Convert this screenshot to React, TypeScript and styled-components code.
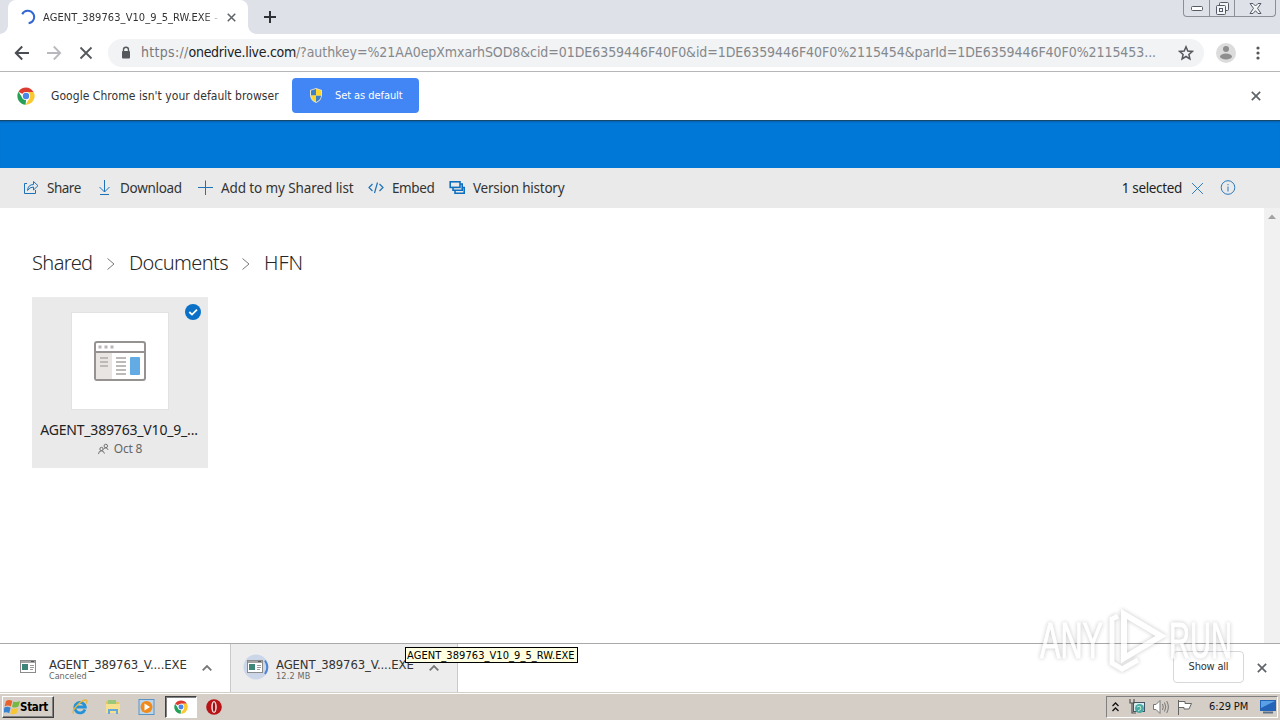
import React from 'react';
import styled, { createGlobalStyle } from 'styled-components';

const GlobalStyle = createGlobalStyle`
  * {
    box-sizing: border-box;
  }
  body {
    margin: 0;
    overflow: hidden;
    background: #fff;
  }
  svg {
    display: block;
    flex: none;
  }
`;

const tahoma = `'DejaVu Sans Condensed', 'DejaVu Sans', sans-serif`;
const segoe = `'Noto Sans', 'Open Sans', sans-serif`;

interface LabelProps {
  $size?: number;
  $spacing?: number;
  $color?: string;
  $left?: number;
}

const Label = styled.span<LabelProps>`
  font-size: ${({ $size = 11 }) => $size}px;
  letter-spacing: ${({ $spacing = 0 }) => $spacing}px;
  color: ${({ $color = '#333' }) => $color};
  margin-left: ${({ $left = 0 }) => $left}px;
  line-height: 16px;
  white-space: pre;
`;

const Screen = styled.div`
  position: relative;
  display: flex;
  flex-direction: column;
  width: 1280px;
  height: 720px;
  overflow: hidden;
  background: #fff;
  font-family: ${tahoma};
`;

const TabStrip = styled.div`
  display: flex;
  height: 34px;
  padding-left: 8px;
  background: #dee1e8;
`;

const Tab = styled.div`
  position: relative;
  display: flex;
  align-items: center;
  width: 240px;
  padding: 0 10px 0 12px;
  border-radius: 8px 8px 0 0;
  background: #fff;

  &::before,
  &::after {
    content: '';
    position: absolute;
    bottom: 0;
    width: 8px;
    height: 8px;
  }
  &::before {
    left: -8px;
    background: radial-gradient(circle at 0 0, transparent 7.5px, #fff 8px);
  }
  &::after {
    right: -8px;
    background: radial-gradient(circle at 100% 0, transparent 7.5px, #fff 8px);
  }
`;

const TabTitle = styled.div`
  display: flex;
  width: 176px;
  margin: 1px 8px 0 7px;
  mask-image: linear-gradient(90deg, #000 160px, transparent 180px);
`;

const NewTab = styled.div`
  display: flex;
  align-items: center;
  margin-left: 16px;
`;

const WindowButtons = styled.div`
  display: flex;
  height: 17px;
  margin: 0 4px 0 auto;
  border: 1px solid #8b8f98;
  border-top: 0;
  border-radius: 0 0 4px 4px;
`;

const WindowButton = styled.div<{ $width: number }>`
  display: flex;
  align-items: center;
  justify-content: center;
  width: ${({ $width }) => $width}px;

  & + & {
    border-left: 1px solid #8b8f98;
  }
`;

const Toolbar = styled.div`
  display: flex;
  align-items: center;
  height: 38px;
  padding: 0 13px 0 14px;
  border-bottom: 1px solid #b4b6b8;
`;

const NavIcons = styled.div`
  display: flex;
  gap: 16px;
  width: 94px;
`;

const AddressBar = styled.div`
  display: flex;
  align-items: center;
  width: 1096px;
  height: 28px;
  padding: 0 10px 0 12px;
  border-radius: 14px;
  background: #f1f3f4;
`;

const Url = styled.div`
  display: flex;
  flex: 1;
  margin: -2px 0 0 9px;
`;

const InfoBar = styled.div`
  display: flex;
  align-items: center;
  height: 48px;
  padding: 0 19px 0 17px;
`;

const InfoMessage = styled.div`
  display: flex;
  align-items: center;
  width: 402px;
  margin-right: auto;
`;

const DefaultButton = styled.div`
  display: flex;
  align-items: center;
  width: 127px;
  height: 35px;
  margin: -1px 0 0 auto;
  padding-left: 17px;
  border-radius: 4px;
  background: #4285f4;
`;

const SuiteHeader = styled.div`
  height: 48px;
  background: #0078d7;
  box-shadow: inset 0 1px 0 #17496f, inset 0 3px 2px -1px #0a60a8;
`;

const CommandBar = styled.div`
  display: flex;
  align-items: center;
  height: 40px;
  padding: 0 44px 0 23px;
  background: #eaeaea;
  font-family: ${segoe};
`;

const Command = styled.div<{ $width: number }>`
  display: flex;
  align-items: center;
  width: ${({ $width }) => $width}px;
`;

const Selection = styled.div`
  display: flex;
  align-items: center;
  margin-left: auto;
`;

const Content = styled.div`
  display: flex;
  height: 435px;
  font-family: ${segoe};
`;

const Files = styled.div`
  flex: 1;
  padding: 38px 32px 0;
`;

const Scrollbar = styled.div`
  display: flex;
  justify-content: center;
  width: 16px;
  padding-top: 6px;
  background: #f1f1f1;
`;

const Breadcrumb = styled.div`
  display: flex;
  align-items: center;
  height: 32px;
`;

const Crumb = styled.span<{ $width: number; $spacing: number }>`
  width: ${({ $width }) => $width}px;
  font-size: 20px;
  font-weight: 300;
  letter-spacing: ${({ $spacing }) => $spacing}px;
  color: #262626;
`;

const Chevron = styled.div`
  width: 37px;
  padding: 3px 0 0 15px;
`;

const Tile = styled.div`
  position: relative;
  display: flex;
  flex-direction: column;
  align-items: center;
  width: 176px;
  height: 171px;
  margin-top: 19px;
  padding-top: 16px;
  background: #eaeaea;
`;

const Thumb = styled.div`
  display: flex;
  align-items: center;
  justify-content: center;
  width: 96px;
  height: 96px;
  margin-bottom: 13px;
  background: #fff;
  box-shadow: 0 0 0 1px #e2e2e2;
`;

const TileMeta = styled.div`
  display: flex;
  align-items: center;
  gap: 5px;
  margin-top: 3px;
`;

const SelectedMark = styled.div`
  position: absolute;
  top: 7px;
  right: 7px;
`;

const Shelf = styled.div`
  display: flex;
  align-items: center;
  height: 49px;
  padding-right: 13px;
  border-top: 1px solid #a9a9a9;
`;

const Download = styled.div<{ $active?: boolean }>`
  display: flex;
  align-items: center;
  width: ${({ $active }) => ($active ? 227 : 231)}px;
  height: 48px;
  padding-left: ${({ $active }) => ($active ? 11 : 20)}px;
  border-right: 1px solid #c9c9c9;
  background: ${({ $active }) => ($active ? '#ededed' : '#fff')};
`;

const FileIcon = styled.div`
  margin-bottom: 3px;
`;

const DownloadText = styled.div<{ $left: number }>`
  display: flex;
  flex-direction: column;
  width: 153px;
  margin: 1px 0 0 ${({ $left }) => $left}px;

  span:last-child {
    line-height: 9px;
    margin-top: -1px;
  }
`;

const ShowAll = styled.div`
  display: flex;
  align-items: center;
  justify-content: center;
  width: 71px;
  height: 32px;
  margin: -2px 13px 0 auto;
  border: 1px solid #d6d8db;
  border-radius: 4px;
`;

const Tooltip = styled.div`
  position: absolute;
  left: 405px;
  top: 647px;
  display: flex;
  align-items: center;
  width: 173px;
  height: 16px;
  padding: 1px 0 0 1px;
  border: 1px solid #000;
  background: #ffffe1;
`;

const Taskbar = styled.div`
  display: flex;
  align-items: center;
  height: 28px;
  padding: 1px 2px 0 2px;
  border-top: 1px solid #d4d0c8;
  background: #d5cec7;
  box-shadow: inset 0 1px 0 #fff;
`;

const StartButton = styled.div`
  display: flex;
  align-items: center;
  width: 52px;
  height: 22px;
  padding-left: 1px;
  border: 1px solid;
  border-color: #fff #404040 #404040 #fff;
  box-shadow: inset -1px -1px 0 #808080;
  font-weight: bold;
`;

const QuickLaunch = styled.div`
  display: flex;
  align-items: center;
  gap: 17px;
  margin-left: 18px;
`;

const RunningApp = styled.div`
  display: flex;
  align-items: center;
  justify-content: center;
  width: 32px;
  height: 22px;
  margin: 0 -8px 0 -7px;
  border: 1px solid;
  border-color: #404040 #fff #fff #404040;
  background: #fff;
  box-shadow: inset 1px 1px 0 #808080;
`;

const Tray = styled.div`
  display: flex;
  align-items: center;
  width: 172px;
  height: 22px;
  margin-left: auto;
  padding-left: 5px;
  border: 1px solid;
  border-color: #808080 #fff #fff #808080;
`;

const Watermark = styled.svg`
  position: absolute;
  left: 1030px;
  top: 600px;
  overflow: visible;
  filter: drop-shadow(0 0 2px rgba(0, 0, 0, 0.3));
  opacity: 0.75;
`;

const Cross: React.FC<{ size: number; color?: string; weight?: number }> = ({ size, color = '#5f6368', weight = 2 }) => (
  <svg width={size} height={size} viewBox="0 0 12 12" stroke={color} strokeWidth={weight}>
    <path d="M1 1L11 11M11 1L1 11" />
  </svg>
);

const ChromeLogo: React.FC<{ size: number }> = ({ size }) => (
  <svg width={size} height={size} viewBox="0 0 18 18">
    <circle cx="9" cy="9" r="8.7" fill="#fff" />
    <path d="M9 9L1.5 4.7A8.7 8.7 0 0 1 16.5 4.9H9Z" fill="#dc3b30" />
    <path d="M9 4.9H16.6A8.7 8.7 0 0 1 8.6 17.7L12.6 11Z" fill="#fbc831" />
    <path d="M1.5 4.7L5.4 11L9 13L8.6 17.7A8.7 8.7 0 0 1 1.5 4.7Z" fill="#26a057" />
    <circle cx="9" cy="9" r="4.1" fill="#fff" />
    <circle cx="9" cy="9" r="3.2" fill="#4a86e8" />
  </svg>
);

const AppIcon = () => (
  <svg width="16" height="13" viewBox="0 0 16 13">
    <rect x="0.5" y="0.5" width="15" height="12" fill="#fff" stroke="#8c8c8c" />
    <path d="M1 2H15" stroke="#a5a5a5" strokeWidth="2" />
    <path d="M11 1.5H14" stroke="#555" />
    <rect x="2" y="4" width="6" height="6" fill="#3e8579" />
    <path d="M10 5.5H14M10 7.5H14M10 9.5H13" stroke="#999" />
  </svg>
);

const Caret = () => (
  <svg width="10" height="6" viewBox="0 0 10 6" fill="none" stroke="#777" strokeWidth="1.8">
    <path d="M0.7 5.3L5 1L9.3 5.3" />
  </svg>
);

const CrumbArrow = () => (
  <Chevron>
    <svg width="8" height="12" viewBox="0 0 8 12" fill="none" stroke="#777">
      <path d="M0.5 0.5L7 6L0.5 11.5" />
    </svg>
  </Chevron>
);

const App: React.FC = () => {
  return (
    <Screen>
      <GlobalStyle />
      <TabStrip>
        <Tab>
          <svg width="16" height="16" viewBox="0 0 16 16" fill="none" stroke="#3367d6" strokeWidth="2">
            <path d="M2.2 5.2A6.3 6.3 0 1 1 8.6 14.3" />
          </svg>
          <TabTitle>
            <Label $spacing={0.08}>AGENT_389763_V10_9_5_RW.EXE -</Label>
          </TabTitle>
          <Cross size={9} />
        </Tab>
        <NewTab>
          <svg width="12" height="12" stroke="#2f3237" strokeWidth="2">
            <path d="M6 0V12M0 6H12" />
          </svg>
        </NewTab>
        <WindowButtons>
          <WindowButton $width={25}>
            <svg width="12" height="5" fill="#fff" stroke="#555a66">
              <rect x="0.5" y="0.5" width="11" height="4" rx="1" />
            </svg>
          </WindowButton>
          <WindowButton $width={25}>
            <svg width="13" height="13" fill="#f4f5f7" stroke="#555a66">
              <rect x="3.5" y="0.5" width="9" height="8" rx="1" />
              <rect x="0.5" y="3.5" width="9" height="9" rx="1" />
              <rect x="3.5" y="6.5" width="3" height="3" />
            </svg>
          </WindowButton>
          <WindowButton $width={41}>
            <svg width="13" height="11" fill="#f4f5f7" stroke="#555a66">
              <path d="M1 0.5H4L6.5 3L9 0.5H12L8.5 5.3L12 10.5H9L6.5 7.7L4 10.5H1L4.5 5.3Z" />
            </svg>
          </WindowButton>
        </WindowButtons>
      </TabStrip>

      <Toolbar>
        <NavIcons>
          <svg width="16" height="16" fill="none" stroke="#4a4d51" strokeWidth="2">
            <path d="M15 8H2M8.2 1.5L1.8 8L8.2 14.5" />
          </svg>
          <svg width="16" height="16" fill="none" stroke="#b7b9bc" strokeWidth="1.8">
            <path d="M1 8H14M7.8 1.5L14.2 8L7.8 14.5" />
          </svg>
          <svg width="16" height="16" stroke="#55585c" strokeWidth="1.8">
            <path d="M2.5 2.5L13.5 13.5M13.5 2.5L2.5 13.5" />
          </svg>
        </NavIcons>
        <AddressBar>
          <svg width="12" height="14" viewBox="0 0 12 14">
            <path d="M3.5 6V3.8a2.5 2.5 0 0 1 5 0V6" fill="none" stroke="#55585c" strokeWidth="1.4" />
            <rect x="2" y="5" width="8" height="7.5" rx="1" fill="#55585c" />
          </svg>
          <Url>
            <Label $size={14} $spacing={0.3} $color="#777a7e">
              https://
            </Label>
            <Label $size={14} $spacing={-0.3} $color="#202124">
              onedrive.live.com
            </Label>
            <Label $size={14} $spacing={-0.06} $color="#85888c">
              /?authkey=%21AA0epXmxarhSOD8&cid=01DE6359446F40F0&id=1DE6359446F40F0%2115454&parId=1DE6359446F40F0%2115453...
            </Label>
          </Url>
          <svg width="16" height="16" viewBox="0 0 16 16" fill="none" stroke="#55585c" strokeWidth="1.5">
            <path d="M8 1.8L9.8 6L14.3 6.4L10.9 9.4L11.9 13.9L8 11.5L4.1 13.9L5.1 9.4L1.7 6.4L6.2 6Z" />
          </svg>
        </AddressBar>
        <Label $left={12}>
          <svg width="20" height="20">
            <circle cx="10" cy="10" r="10" fill="#dcdcdc" />
            <circle cx="10" cy="6" r="3" fill="#8e8e8e" />
            <ellipse cx="10" cy="13.5" rx="6" ry="3" fill="#8e8e8e" />
          </svg>
        </Label>
        <Label $left={20}>
          <svg width="4" height="14" fill="#55585c">
            <circle cx="2" cy="2" r="1.6" />
            <circle cx="2" cy="7" r="1.6" />
            <circle cx="2" cy="12" r="1.6" />
          </svg>
        </Label>
      </Toolbar>

      <InfoBar>
        <InfoMessage>
          <ChromeLogo size={18} />
          <Label $size={12} $spacing={0.05} $left={16}>
            Google Chrome isn't your default browser
          </Label>
          <DefaultButton>
            <svg width="14" height="15" viewBox="0 0 14 15">
              <path d="M7 0L13 2V7Q13 12 7 15Q1 12 1 7V2Z" fill="#e8e3c4" />
              <path d="M7 1V7.5H2V2.6ZM7 7.5H12Q12 11.5 7 14Z" fill="#3d7fc9" />
              <path d="M7 1L12 2.6V7.5H7ZM2 7.5H7V14Q2 11.5 2 7.5Z" fill="#ffd52e" />
            </svg>
            <Label $spacing={-0.07} $color="#fff" $left={12}>
              Set as default
            </Label>
          </DefaultButton>
        </InfoMessage>
        <Cross size={10} />
      </InfoBar>

      <SuiteHeader />
      <CommandBar>
        <Command $width={75}>
          <svg width="16" height="16" viewBox="0 0 16 16" fill="none" stroke="#1f72b8">
            <path d="M4 3.5H1.5V13.5H12.5V10" />
            <path d="M4.5 10.5Q5 4.5 10.5 4.5V1.5L15 5.7L10.5 10V7Q6.5 7 4.5 10.5Z" />
          </svg>
          <Label $size={13.5} $spacing={-0.5} $left={8}>
            Share
          </Label>
        </Command>
        <Command $width={99}>
          <svg width="14" height="16" viewBox="0 0 14 16" fill="none" stroke="#1f72b8">
            <path d="M6.5 0V12M1.5 7L6.5 12L11.5 7M2 14.5H11" />
          </svg>
          <Label $size={13.5} $spacing={-0.3} $left={8}>
            Download
          </Label>
        </Command>
        <Command $width={171}>
          <svg width="16" height="16" stroke="#1f72b8">
            <path d="M8.5 0.5V15M1 7.5H16" />
          </svg>
          <Label $size={13.5} $spacing={-0.1} $left={8}>
            Add to my Shared list
          </Label>
        </Command>
        <Command $width={81}>
          <svg width="16" height="14" fill="none" stroke="#1f72b8" strokeWidth="1.2">
            <path d="M4.5 3L1 6.5L4.5 10M11.5 3L15 6.5L11.5 10M9.5 1.5L6.5 12" />
          </svg>
          <Label $size={13.5} $spacing={-0.4} $left={8}>
            Embed
          </Label>
        </Command>
        <Command $width={130}>
          <svg width="17" height="16" fill="#eaeaea" stroke="#106ebe" strokeWidth="1.6">
            <path d="M6 9V13.2H15.2V7.5H13" />
            <path d="M4 7V10.2H13.2V4H11" />
            <rect x="1.2" y="1.8" width="9.8" height="5.6" />
          </svg>
          <Label $size={13.5} $spacing={-0.23} $left={7}>
            Version history
          </Label>
        </Command>
        <Selection>
          <Label $size={13.5} $spacing={-0.35} $color="#222">
            1 selected
          </Label>
          <Label $left={9}>
            <Cross size={13} color="#2a78bb" weight={0.9} />
          </Label>
          <Label $left={16}>
            <svg width="16" height="16" fill="none" stroke="#2a78bb">
              <circle cx="8" cy="7.5" r="6.8" />
              <path d="M8 6.5V11.5M8 4V5.2" />
            </svg>
          </Label>
        </Selection>
      </CommandBar>

      <Content>
        <Files>
          <Breadcrumb>
            <Crumb $width={60} $spacing={-0.6}>
              Shared
            </Crumb>
            <CrumbArrow />
            <Crumb $width={98} $spacing={-0.6}>
              Documents
            </Crumb>
            <CrumbArrow />
            <Crumb $width={45} $spacing={0}>
              HFN
            </Crumb>
          </Breadcrumb>
          <Tile>
            <Thumb>
              <svg width="52" height="40" viewBox="0 0 52 40">
                <rect x="1" y="1" width="50" height="38" rx="2" fill="#fff" stroke="#959291" strokeWidth="2" />
                <rect x="2" y="12" width="16" height="26" fill="#e9e5e3" />
                <path d="M1 11H51" stroke="#959291" strokeWidth="2" />
                <path d="M4.5 6H7.5M10.5 6H13.5M16.5 6H19.5" stroke="#bab6b4" strokeWidth="3" />
                <path d="M6 17H14M6 21H14M6 25H14M22 17H32M22 21H32M22 25H32M22 29H32M22 33H32" stroke="#bdb9b7" strokeWidth="1.8" />
                <rect x="36" y="16" width="10" height="18" rx="1" fill="#62abe5" />
              </svg>
            </Thumb>
            <Label $size={14} $spacing={-0.18} $color="#222" $left={-2}>
              AGENT_389763_V10_9_...
            </Label>
            <TileMeta>
              <svg width="11" height="12" viewBox="0 0 12 12" fill="none" stroke="#666">
                <circle cx="3.8" cy="6" r="1.8" />
                <path d="M0.5 11.5Q0.8 8 3.8 8Q6.5 8 7 11M6 6.5Q7 4.7 8.5 4.7Q10.3 4.8 11 7" />
                <circle cx="8.5" cy="2.7" r="1.9" />
              </svg>
              <Label $size={12} $spacing={-0.2} $color="#666">
                Oct 8
              </Label>
            </TileMeta>
            <SelectedMark>
              <svg width="16" height="16" fill="none">
                <circle cx="8" cy="8" r="8" fill="#0a71c7" />
                <path d="M4.3 8L7 10.6L12 5.7" stroke="#fff" strokeWidth="1.8" />
              </svg>
            </SelectedMark>
          </Tile>
        </Files>
        <Scrollbar>
          <svg width="8" height="5" fill="#a3a3a3">
            <path d="M0 5L4 0.5L8 5Z" />
          </svg>
        </Scrollbar>
      </Content>

      <Shelf>
        <Download>
          <FileIcon>
            <AppIcon />
          </FileIcon>
          <DownloadText $left={13}>
            <Label $size={13} $spacing={-0.13}>
              AGENT_389763_V....EXE
            </Label>
            <Label $size={9} $color="#666">
              Canceled
            </Label>
          </DownloadText>
          <Caret />
        </Download>
        <Download $active>
          <svg width="28" height="28" viewBox="0 0 28 28">
            <circle cx="14" cy="13" r="12.5" fill="#cbd7e9" />
            <path d="M23 6.5A12 12 0 0 1 23 20" fill="none" stroke="#4b84d6" strokeWidth="2" />
            <g transform="translate(5 6)">
              <AppIcon />
            </g>
          </svg>
          <DownloadText $left={6}>
            <Label $size={13} $spacing={-0.13}>
              AGENT_389763_V....EXE
            </Label>
            <Label $size={9} $spacing={0.2} $color="#666">
              12.2 MB
            </Label>
          </DownloadText>
          <Caret />
        </Download>
        <ShowAll>
          <Label $spacing={-0.2}>Show all</Label>
        </ShowAll>
        <Cross size={10} />
      </Shelf>

      <Taskbar>
        <StartButton>
          <svg width="16" height="16" viewBox="0 0 16 16">
            <path d="M2 2Q5 0 8.3 2L6.9 7.6Q4 5.6 0.6 7.4Z" fill="#e8622c" />
            <path d="M9.3 2.4Q12.3 4 16 2L14.4 7.6Q11 9.3 8 8Z" fill="#75b843" />
            <path d="M0.4 8.6Q3.5 6.9 6.6 8.8L5.2 14.2Q2.5 12.3 -0.8 13.8Z" fill="#3c83cf" />
            <path d="M7.7 9.2Q10.8 10.6 14 8.8L12.6 14.2Q9 16 6.3 14.6Z" fill="#f7c631" />
          </svg>
          <Label $size={11.5} $spacing={-0.3} $color="#000">
            Start
          </Label>
        </StartButton>
        <QuickLaunch>
          <svg width="16" height="16" viewBox="0 0 16 16" fill="none">
            <path d="M13 10.5A5.3 5.3 0 1 1 13.3 8H4" stroke="#2492d8" strokeWidth="2.8" />
            <path d="M1.5 14.5C-1 11 11-1 14.7 1.4Q15.5 2.5 14 4.5" stroke="#e9b638" strokeWidth="1.3" />
          </svg>
          <svg width="16" height="16" viewBox="0 0 16 16">
            <path d="M1 2H6L7 3H14V13H1Z" fill="#e4c468" />
            <rect x="3" y="1" width="8" height="4" fill="#9bc77b" />
            <path d="M1 5H15V14H1Z" fill="#f6e08e" />
            <path d="M3 15V10H13V15H11V12H5V15Z" fill="#64a9dc" />
          </svg>
          <svg width="17" height="16" viewBox="0 0 16 16">
            <rect x="0.5" y="0.5" width="15" height="15" fill="#b8d6ee" stroke="#5b93c5" />
            <circle cx="8" cy="8" r="6" fill="#f08a1c" />
            <path d="M6 4.5L11.5 8L6 11.5Z" fill="#fff" />
          </svg>
          <RunningApp>
            <ChromeLogo size={14} />
          </RunningApp>
          <svg width="16" height="16" viewBox="0 0 16 16">
            <circle cx="8" cy="8" r="7.8" fill="#b81418" />
            <ellipse cx="8" cy="8" rx="2.8" ry="6" fill="#f0dcdc" />
            <ellipse cx="8" cy="8" rx="1.2" ry="4.8" fill="#a01013" />
          </svg>
        </QuickLaunch>
        <Tray>
          <svg width="7" height="10" fill="none" stroke="#111" strokeWidth="1.3">
            <path d="M0.5 4L3.5 1L6.5 4M0.5 9L3.5 6L6.5 9" />
          </svg>
          <Label $left={10}>
            <svg width="16" height="16" viewBox="0 0 16 16">
              <rect x="4.5" y="3.5" width="11" height="9" fill="#d8efef" stroke="#456" />
              <circle cx="10.5" cy="9.5" r="4.5" fill="#4ba8a4" />
              <path d="M8 8L11 7L12 10L9 12" stroke="#c0ead4" fill="none" />
              <path d="M1 0V4H5V0M3 4V14H7" fill="none" stroke="#555" strokeWidth="1.2" />
            </svg>
          </Label>
          <Label $left={8}>
            <svg width="16" height="14" fill="#fff" stroke="#777">
              <path d="M0.5 4.5H3L7 0.5V13.5L3 9.5H0.5Z" />
              <path d="M9.5 4Q11 7 9.5 10M11.5 2.5Q14 7 11.5 11.5M13.7 1Q17 7 13.7 13" fill="none" />
            </svg>
          </Label>
          <Label $left={8}>
            <svg width="16" height="15" fill="#fff" stroke="#666">
              <path d="M1.5 0V15M1.5 1.5H8V3.5H14.5L12 9H7V7.5H1.5" />
            </svg>
          </Label>
          <Label $left={16} $spacing={-0.1} $color="#111">
            6:29 PM
          </Label>
          <Label $left={12}>
            <svg width="16" height="14">
              <rect width="16" height="11" fill="#2464b8" />
              <path d="M1 1H15L1 8Z" fill="#5aa0e6" />
              <path d="M3 12.5H13" stroke="#5c7186" strokeWidth="2" />
            </svg>
          </Label>
        </Tray>
      </Taskbar>

      <Tooltip>
        <Label $spacing={0.07} $color="#000">
          AGENT_389763_V10_9_5_RW.EXE
        </Label>
      </Tooltip>
      <Watermark
        width="212"
        height="80"
        fontFamily="Liberation Sans"
        fontSize="50"
        fill="#fff"
        stroke="#fff"
        strokeWidth="1"
      >
        <text x="10" y="58" textLength="63" lengthAdjust="spacingAndGlyphs">
          ANY
        </text>
        <text x="139" y="58" textLength="63" lengthAdjust="spacingAndGlyphs">
          RUN
        </text>
        <path d="M88 16L82 19V63L92 69L108 60" fill="none" strokeWidth="5" />
        <path d="M94 14L131 36L94 58Z" fill="none" strokeWidth="6" />
      </Watermark>
    </Screen>
  );
};

export default App;
